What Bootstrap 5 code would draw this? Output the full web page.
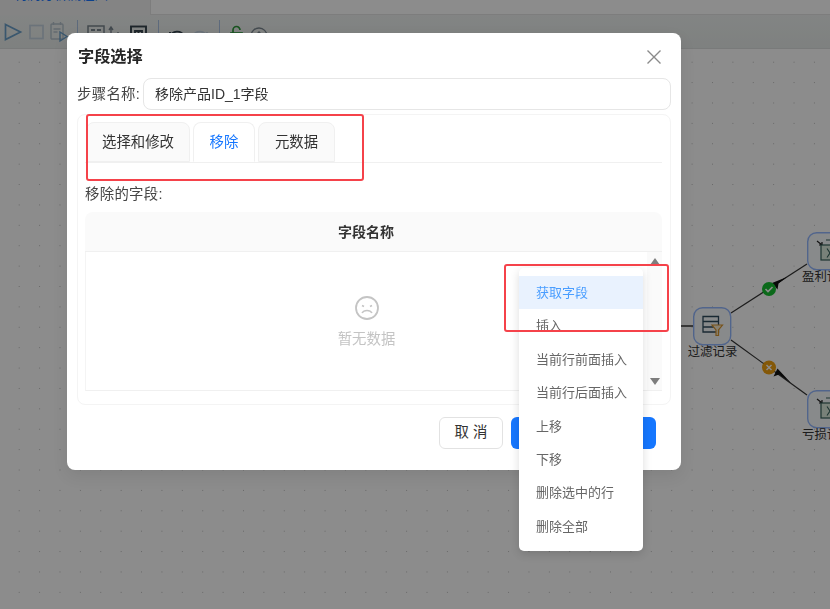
<!DOCTYPE html>
<html lang="zh-CN">
<head>
<meta charset="UTF-8">
<meta name="viewport" content="width=device-width, initial-scale=1.0">
<title>字段选择</title>
<link href="https://cdn.jsdelivr.net/npm/bootstrap@5.3.0/dist/css/bootstrap.min.css" rel="stylesheet">
<style>
html, body { height: 100%; }
body { margin: 0; overflow: hidden; background: #fff; color: #333; font-family: "Liberation Sans", "Noto Sans CJK SC", sans-serif; font-size: 14.4px; }

/* page behind the dialog */
.page-shell { height: 609px; }
.top-band { height: 15px; overflow: hidden; background: #f0f0f0; }
.flow-title { width: 150px; color: #1677ff; font-size: 13.5px; line-height: 16px; margin-top: -13px; white-space: nowrap; overflow: hidden; }
.top-box { border-left: 1px solid #e4e4e4; border-bottom: 1px solid #e4e4e4; background: #fff; }
.tool-bar { height: 34px; padding-left: 2px; background: linear-gradient(#eef1f0, #e6ebe9); border-bottom: 1px solid #dcdfde; overflow: hidden; }
.tool-bar svg { flex: none; }
.tool-sep { width: 1px; height: 24px; background: #a9c2e2; margin: 0 9px 0 8px; }
.flow-canvas { position: relative; height: 560px; background-color: #fff; background-image: radial-gradient(#bdbdbd 0.7px, transparent 0.9px); background-size: 20.4px 20.4px; background-position: 9px 3px; }
.flow-svg { position: absolute; left: 0; top: -49px; }
.modal-backdrop.show { opacity: .45; }

/* dialog */
.field-dialog { position: absolute; left: 67px; top: 33px; width: 614px; height: 437px; z-index: 1060; border: 0; border-radius: 8px; padding: 0 10px; background: #fff; box-shadow: 0 6px 16px rgba(0,0,0,.08); }
.dialog-head { height: 45px; padding: 2px 0 0 1px; }
.dialog-title { font-size: 16.2px; font-weight: 700; color: #262626; }
.dialog-close { width: 18px; height: 18px; margin-right: 8px; }
.step-label { flex: none; width: 66px; margin-top: 1px; color: #444; letter-spacing: .3px; white-space: nowrap; }
.step-input.form-control { height: 32px; padding: 0 11px 3px; font-size: 14px; color: #333; border: 1px solid #e6e6e6; border-radius: 8px; }
.tab-panel { margin-top: 4px; height: 291px; padding: 7px 8px 0 7px; border: 1px solid #f4f4f4; border-radius: 8px; }
.flow-tabs.nav-tabs { height: 41px; gap: 3px; padding-left: 1px; border-bottom: 1px solid #f0f0f0; }
.flow-tabs .nav-link { height: 40px; margin: 0; padding: 0; line-height: 38px; text-align: center; white-space: nowrap; font-size: 14.4px; color: #333; background: #fafafa; border: 1px solid #f0f0f0; border-radius: 8px 8px 0 0; }
.flow-tabs .nav-link.active { color: #1677ff; background: #fff; border-color: #f0f0f0 #f0f0f0 #fff; }
.flow-tabs .tab-first { width: 104px; }
.flow-tabs .tab-mid { width: 62px; }
.flow-tabs .tab-last { width: 77px; }
.remove-label { margin-top: 21px; height: 21px; line-height: 21px; color: #444; letter-spacing: .3px; }
.field-table { margin-top: 7px; width: 577px; }
.field-head { height: 40px; line-height: 40px; padding-right: 15px; text-align: center; font-weight: 700; font-size: 14px; color: #333; background: #fafafa; border-bottom: 1px solid #f0f0f0; border-radius: 8px 8px 0 0; }
.field-body { height: 139px; border-bottom: 1px solid #f0f0f0; border-left: 1px solid #f4f4f4; }
.empty-col { padding-top: 3px; color: #c4c4c4; font-size: 14.4px; }
.scroll-col { width: 15px; background: #fafafa; padding: 6px 0 5px; }
.dialog-foot { margin-top: 12px; padding-right: 15px; gap: 8px; }
.btn-cancel.btn { width: 64px; height: 32px; padding: 0; font-size: 14.4px; color: #333; background: #fff; border: 1px solid #e2e2e2; border-radius: 6px; }
.btn-ok.btn { width: 145px; height: 32px; padding: 0; font-size: 14.4px; color: #fff; background: #1677ff; border: 0; border-radius: 6px; }

/* context menu */
.ctx-menu.dropdown-menu { display: block; position: absolute; left: 519px; top: 268px; width: 124px; min-width: 0; height: 283px; z-index: 1070; padding: 8px 0 0; border: 0; border-radius: 5px; box-shadow: 0 3px 10px rgba(0,0,0,.14); }
.ctx-menu .dropdown-item { height: 33.4px; line-height: 33.4px; padding: 0 0 0 17px; color: #666; font-size: 13px; }
.ctx-menu .dropdown-item.active { color: #4a9eff; background: #e9f2fe; }

/* red marks drawn on the screenshot */
.red-mark { position: absolute; z-index: 1080; border: 2px solid #f5424a; border-radius: 3px; pointer-events: none; }
.mark-tabs { left: 86px; top: 114px; width: 278px; height: 67px; }
.mark-menu { left: 504px; top: 264px; width: 165px; height: 68px; }
</style>
</head>
<body>

<div class="page-shell d-flex flex-column">
    <div class="top-band d-flex">
        <div class="flow-title">个利润分析流程图</div>
        <div class="top-box flex-grow-1"></div>
    </div>

    <!-- toolbar, mostly hidden by the dialog -->
    <div class="tool-bar d-flex align-items-center">
        <svg width="24" height="24" viewBox="0 0 24 24" fill="none" stroke="#6a9fc8" stroke-width="1.7"><path d="M3.5 4.5l15 7.5-15 7.5z"/></svg>
        <svg width="22" height="24" viewBox="0 0 22 24" fill="none" stroke="#c4d2de" stroke-width="1.7"><rect x="4" y="5.5" width="13" height="13"/></svg>
        <svg width="21" height="24" viewBox="0 0 21 24" fill="none" stroke="#b4c2cc" stroke-width="1.4"><rect x="3" y="4" width="12" height="15" rx="1"/><path d="M5.5 2v3M12.5 2v3M5.5 9h7M5.5 12h4"/><path d="M12 12l7 4.500-7 4.500z" stroke="#6a9fc8"/></svg>
        <div class="tool-sep"></div>
        <svg width="21" height="24" viewBox="0 0 21 24" fill="none" stroke="#7b8790" stroke-width="1.5"><rect x="1" y="6" width="16" height="12"/><path d="M4 10h4M10 10h4" stroke-width="2.2"/></svg>
        <svg width="17" height="24" viewBox="0 0 17 24" fill="none" stroke="#7b8790" stroke-width="1.4"><path d="M3 20V8M1 10l2-3 2 3M10 12v8M10 20l3-5"/></svg>
        <svg width="25" height="24" viewBox="0 0 25 24" fill="none" stroke="#37464f" stroke-width="1.9"><rect x="6" y="6.500" width="15" height="15"/><path d="M10 20v-9h7v9M13.500 11v5"/></svg>
        <div class="tool-sep"></div>
        <svg width="22" height="24" viewBox="0 0 22 24" fill="none" stroke="#37464f" stroke-width="1.9"><path d="M2 17a7.500 7.500 0 0 1 14-1M2 12v5h5"/></svg>
        <svg width="21" height="24" viewBox="0 0 21 24" fill="none" stroke="#c4d2de" stroke-width="1.9"><path d="M17 17a7.500 7.500 0 0 0-14-1M17 12v5h-5"/></svg>
        <div class="tool-sep"></div>
        <svg width="22" height="24" viewBox="0 0 22 24" fill="none" stroke="#2f9a3c" stroke-width="1.7"><rect x="2" y="13" width="11" height="9"/><path d="M4 13V10a3.500 3.500 0 0 1 7 0"/></svg>
        <svg width="22" height="24" viewBox="0 0 22 24" fill="none" stroke="#7b8790" stroke-width="1.3"><circle cx="8" cy="16" r="8"/><path d="M8 12v6M5 15l3-3 3 3"/></svg>
    </div>

    <!-- flow diagram -->
    <div class="flow-canvas flex-grow-1">
        <svg class="flow-svg" width="830" height="609" viewBox="0 0 830 609" font-family="'Noto Sans CJK SC', sans-serif" font-size="12.4" fill="#333">
            <defs>
                <g id="excelNode">
                    <rect x="0.7" y="0.7" width="37" height="37" rx="9" fill="#f8fbfd" stroke="#94b8ff" stroke-width="1.4"/>
                    <path d="M10 9l5 4M15 10v3h-3" fill="none" stroke="#222" stroke-width="1.2"/>
                    <path d="M19 8h11v3" fill="none" stroke="#37605a" stroke-width="1.1"/>
                    <rect x="14" y="13" width="17" height="15" fill="#dcebdd" stroke="#37605a" stroke-width="1.2"/>
                    <path d="M20 16.500l6 9M26 16.500l-6 9" stroke="#37605a" stroke-width="1.1"/>
                </g>
            </defs>
            <path d="M660 326H693" stroke="#333" stroke-width="1.3"/>
            <path d="M731 313L807 264" stroke="#333" stroke-width="1.2"/>
            <path d="M731 340L807 395" stroke="#333" stroke-width="1.2"/>
            <path d="M787 277L772 283L777.500 289.500L778.500 283.500z" fill="#111"/>
            <path d="M791 383L777.500 368.500L773.500 376.500L779 374.500z" fill="#111"/>

            <rect x="693.7" y="307.7" width="37" height="37" rx="9" fill="#f8fbfd" stroke="#94b8ff" stroke-width="1.4"/>
            <path d="M703 316.500h15.500v15.500h-15.500zM703 321.500h15.500M703 327h12" fill="none" stroke="#2f4c5e" stroke-width="1.3"/>
            <path d="M712 325h10.500l-4 5v5.500h-2.500v-5.500z" fill="#f8ecd0" stroke="#d9962f" stroke-width="1.2"/>
            <text x="712.500" y="356" text-anchor="middle">过滤记录</text>

            <use href="#excelNode" x="807" y="232"/>
            <text x="802" y="281">盈利记录</text>
            <use href="#excelNode" x="807" y="390"/>
            <text x="802" y="439">亏损记录</text>

            <circle cx="769" cy="289" r="7" fill="#14c030"/>
            <path d="M765.500 289l2.500 2.500 4.500-4.500" fill="none" stroke="#fff" stroke-width="1.6"/>
            <circle cx="769" cy="367.500" r="7" fill="#f0a010"/>
            <path d="M766.500 365l5 5M771.500 365l-5 5" fill="none" stroke="#fff" stroke-width="1.5"/>
        </svg>
    </div>
</div>

<div class="modal-backdrop show"></div>

<!-- dialog -->
<div class="field-dialog modal-content">
    <div class="dialog-head d-flex align-items-center justify-content-between">
        <span class="dialog-title">字段选择</span>
        <svg class="dialog-close" viewBox="0 0 18 18" fill="none" stroke="#8a8a8a" stroke-width="1.4"><path d="M2.500 2.500l13 13M15.500 2.500l-13 13"/></svg>
    </div>
    <div class="d-flex align-items-center">
        <label class="step-label" for="stepName">步骤名称:</label>
        <input id="stepName" class="step-input form-control" type="text" value="移除产品ID_1字段">
    </div>
    <div class="tab-panel">
        <ul class="flow-tabs nav nav-tabs">
            <li class="nav-item"><a class="nav-link tab-first" href="#">选择和修改</a></li>
            <li class="nav-item"><a class="nav-link tab-mid active" href="#">移除</a></li>
            <li class="nav-item"><a class="nav-link tab-last" href="#">元数据</a></li>
        </ul>
        <div class="remove-label">移除的字段:</div>
        <div class="field-table">
            <div class="field-head">字段名称</div>
            <div class="field-body d-flex">
                <div class="empty-col flex-grow-1 d-flex flex-column align-items-center justify-content-center">
                    <svg width="26" height="26" viewBox="0 0 26 26" fill="none" stroke="#c4c4c4" stroke-width="1.8"><circle cx="13" cy="13" r="11"/><path d="M8 18c2-3.500 8-3.500 10 0" stroke-width="1.5"/><path d="M8 10.500l2 1M18 10.500l-2 1" stroke-width="1.6"/></svg>
                    <span class="mt-2">暂无数据</span>
                </div>
                <div class="scroll-col d-flex flex-column align-items-center justify-content-between">
                    <svg width="10" height="7" viewBox="0 0 10 7"><path d="M5 0l5 7H0z" fill="#7d7d7d"/></svg>
                    <svg width="10" height="7" viewBox="0 0 10 7"><path d="M0 0h10L5 7z" fill="#7d7d7d"/></svg>
                </div>
            </div>
        </div>
    </div>
    <div class="dialog-foot d-flex justify-content-end">
        <button class="btn-cancel btn" type="button">取 消</button>
        <button class="btn-ok btn" type="button">确 定</button>
    </div>
</div>

<!-- right click menu -->
<div class="ctx-menu dropdown-menu">
    <a class="dropdown-item active" href="#">获取字段</a>
    <a class="dropdown-item" href="#">插入</a>
    <a class="dropdown-item" href="#">当前行前面插入</a>
    <a class="dropdown-item" href="#">当前行后面插入</a>
    <a class="dropdown-item" href="#">上移</a>
    <a class="dropdown-item" href="#">下移</a>
    <a class="dropdown-item" href="#">删除选中的行</a>
    <a class="dropdown-item" href="#">删除全部</a>
</div>

<div class="red-mark mark-tabs"></div>
<div class="red-mark mark-menu"></div>

<script src="https://cdn.jsdelivr.net/npm/bootstrap@5.3.0/dist/js/bootstrap.bundle.min.js"></script>
</body>
</html>
